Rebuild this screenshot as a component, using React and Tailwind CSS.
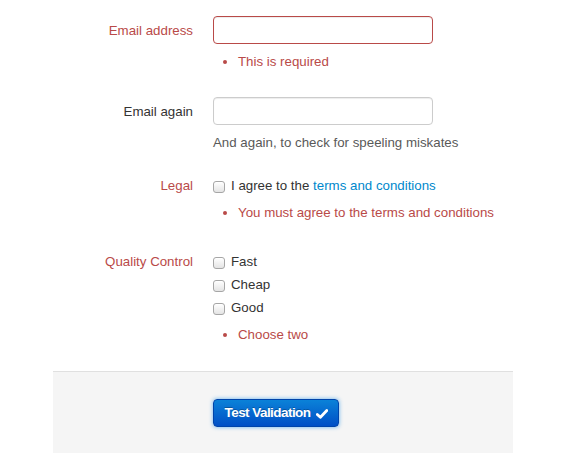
import React from "react";

function Box() {
  return (
    <span className="mt-[5px] mr-[6px] inline-block h-[12px] w-[12px] shrink-0 rounded-[3px] border border-[#a6a6a6] bg-[linear-gradient(to_bottom,#ffffff,#e4e4e4)] shadow-[inset_0_1px_0_rgba(255,255,255,0.8)]" />
  );
}

function ErrorList({ children, className = "" }) {
  return (
    <ul className={"list-disc pl-[25px] text-[#b94a48] marker:text-[13px] " + className}>
      <li>{children}</li>
    </ul>
  );
}

export default function App() {
  return (
    <div className="w-[570px] min-h-[468px] bg-white pt-[16px] font-['Liberation_Sans',Arial,sans-serif] text-[13.3px] leading-[20px] text-[#333]">
      {/* Email address */}
      <div className="flex pl-[33px]">
        <div className="w-[160px] pt-[5px] text-right text-[#b94a48]">Email address</div>
        <div className="ml-[20px] flex flex-col">
          <div className="h-[28px] w-[220px] rounded-[4px] border border-[#b94a48] bg-white shadow-[inset_0_1px_1px_rgba(0,0,0,0.075)]" />
          <ErrorList className="mt-[8px]">This is required</ErrorList>
        </div>
      </div>

      {/* Email again */}
      <div className="mt-[25px] flex pl-[33px]">
        <div className="w-[160px] pt-[5px] text-right">Email again</div>
        <div className="ml-[20px] flex flex-col">
          <div className="h-[28px] w-[220px] rounded-[4px] border border-[#cccccc] bg-white shadow-[inset_0_1px_1px_rgba(0,0,0,0.075)]" />
          <div className="mt-[8px] text-[#595959]">And again, to check for speeling miskates</div>
        </div>
      </div>

      {/* Legal */}
      <div className="mt-[23px] flex pl-[33px]">
        <div className="w-[160px] text-right text-[#b94a48]">Legal</div>
        <div className="ml-[20px] flex flex-col">
          <div className="flex items-start">
            <Box />
            <span>
              I agree to the <span className="text-[#0088cc]">terms and conditions</span>
            </span>
          </div>
          <ErrorList className="mt-[7px]">You must agree to the terms and conditions</ErrorList>
        </div>
      </div>

      {/* Quality control */}
      <div className="mt-[29px] flex pl-[33px]">
        <div className="w-[160px] text-right text-[#b94a48]">Quality Control</div>
        <div className="ml-[20px] flex flex-col gap-[3px]">
          <div className="flex items-start">
            <Box />
            <span>Fast</span>
          </div>
          <div className="flex items-start">
            <Box />
            <span>Cheap</span>
          </div>
          <div className="flex items-start">
            <Box />
            <span>Good</span>
          </div>
          <ErrorList className="mt-[4px]">Choose two</ErrorList>
        </div>
      </div>

      {/* Form actions */}
      <div className="ml-[53px] mt-[26px] w-[460px] border-t border-[#e0e0e0] bg-[#f5f5f5] pb-[26px] pl-[160px] pt-[27px]">
        <button className="flex h-[28px] w-[126px] items-center justify-center gap-[5px] rounded-[4px] border border-[#0044aa] bg-[linear-gradient(to_bottom,#0b82d8,#004fc6)] text-[13.5px] font-bold tracking-[-0.55px] text-white shadow-[0_0_4px_rgba(82,168,236,0.9)] [text-shadow:0_-1px_0_rgba(0,0,0,0.25)]">
          <span>Test Validation</span>
          <svg width="12" height="10" viewBox="0 0 12 10" className="mt-[1px]">
            <path d="M1.3 5.4 L4.4 8.3 L10.8 1.5" fill="none" stroke="white" strokeWidth="2.8" strokeLinecap="round" strokeLinejoin="round" />
          </svg>
        </button>
      </div>
    </div>
  );
}
